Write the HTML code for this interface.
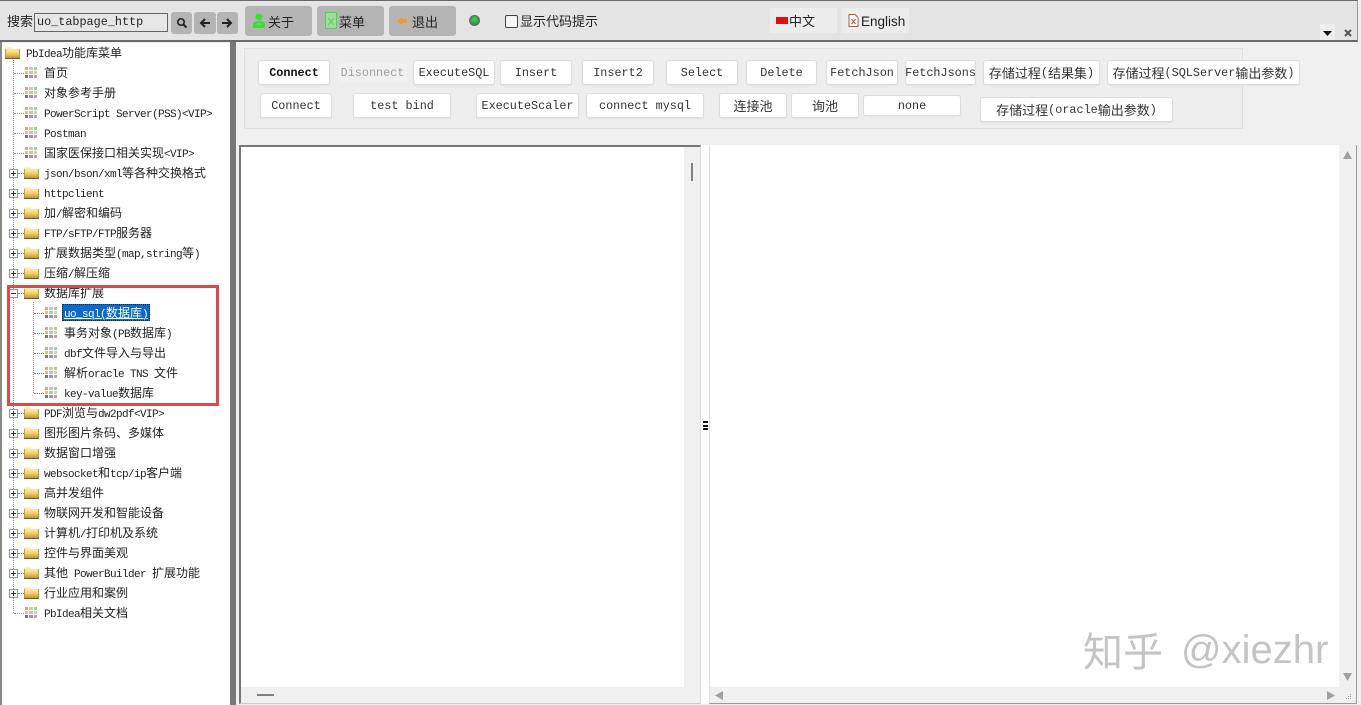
<!DOCTYPE html>
<html lang="zh"><head><meta charset="utf-8"><title>PbIdea</title>
<style>
html,body{margin:0;padding:0;width:1361px;height:705px;overflow:hidden;background:#f0f0f0}
body{position:relative;font-family:"Liberation Mono","Noto Sans CJK SC",monospace;color:#222}
div,span,svg{position:absolute;box-sizing:border-box}
i{font-style:normal}
.t{left:0;font-size:11px;letter-spacing:-.6px;line-height:20px;height:20px;white-space:pre;color:#222}
.t::before{content:"一";font:12px/20px "Noto Sans CJK SC",sans-serif;display:inline-block;width:0;visibility:hidden}
.t i{position:static;font-size:12px;letter-spacing:0;font-family:"Noto Sans CJK SC",sans-serif}
.b{background:#fff;border:1px solid #dcdcdc;border-radius:3px;box-shadow:0 1px 1px #e2e2e2;font-size:11.8px;display:flex;align-items:center;justify-content:center;white-space:pre;color:#333}
.b i{font-size:13px;font-family:"Noto Sans CJK SC",sans-serif}
.tb{background:#b4b4b4;border-radius:3px;top:6px;height:30px;width:67px}
.tl{font:13px/20px "Noto Sans CJK SC",sans-serif;color:#222;white-space:nowrap}
.px{width:9px;height:9px;border:1px solid #8a9aa8;background:#f6f6f6;left:9px}
.px:before{content:"";position:absolute;left:1px;top:3px;width:5px;height:1px;background:#333}
.px.p:after{content:"";position:absolute;left:3px;top:1px;width:1px;height:5px;background:#333}
.dh{height:1px;border-top:1px dotted #888}
.dv{width:1px;border-left:1px dotted #888}
</style></head><body>
<svg width="0" height="0" style="left:0;top:0"><defs>
<symbol id="g" viewBox="0 0 12 11"><rect x="0" y="0" width="3" height="3" fill="#e0a0a0"/><rect x="4" y="0" width="4" height="3" fill="#d0c4bc"/><rect x="9" y="0" width="3" height="3" fill="#a4cca4"/><rect x="0" y="4" width="3" height="3" fill="#e4bc84"/><rect x="4" y="4" width="4" height="3" fill="#b4ccac"/><rect x="9" y="4" width="3" height="3" fill="#c8d8a0"/><rect x="0" y="8" width="3" height="3" fill="#777"/><rect x="4" y="8" width="4" height="3" fill="#a890b8"/><rect x="9" y="8" width="3" height="3" fill="#b8a0c0"/></symbol>
<linearGradient id="fg" x1="0" y1="0" x2="0" y2="1"><stop offset="0" stop-color="#fff6c4"/><stop offset=".5" stop-color="#f4d470"/><stop offset="1" stop-color="#b88a28"/></linearGradient>
<symbol id="f" viewBox="0 0 15 12"><path d="M0 2V11q0 1 1 1h13q1 0 1-1V2H7L6 0H1Q0 0 0 1Z" fill="url(#fg)"/><path d="M0 11.500H15" stroke="#6a5a30"/><path d="M.5 2V11M14.500 2V11" stroke="#a89050" stroke-width=".8"/></symbol>
</defs></svg>

<!-- toolbar -->
<div style="left:0;top:0;width:1358px;height:42px;background:#e4e4e4;border-top:1px solid #6a6a6a;border-bottom:2px solid #6a6a6a;border-right:1px solid #999"></div>
<div class="tl" style="left:7px;top:11px">搜索</div>
<div style="left:34px;top:13px;width:134px;height:19px;background:#e6e6e6;border:1px solid #666;font-size:11.8px;line-height:17px;padding-left:2px;white-space:pre">uo_tabpage_http</div>
<div style="left:171px;top:12px;width:21px;height:22px;background:#b4b4b4;border-radius:3px"></div>
<svg style="left:176px;top:17px" width="12" height="12" viewBox="0 0 12 12"><circle cx="5" cy="5" r="3.200" fill="none" stroke="#222" stroke-width="1.600"/><path d="M7.500 7.500L10.500 10.500" stroke="#222" stroke-width="2"/></svg>
<div style="left:194px;top:12px;width:22px;height:22px;background:#b4b4b4;border-radius:3px"></div>
<svg style="left:199px;top:17px" width="12" height="12" viewBox="0 0 12 12"><path d="M11 6H2M6 2L2 6l4 4" fill="none" stroke="#222" stroke-width="2"/></svg>
<div style="left:217px;top:12px;width:21px;height:22px;background:#b4b4b4;border-radius:3px"></div>
<svg style="left:221px;top:17px" width="12" height="12" viewBox="0 0 12 12"><path d="M1 6h9M6 2l4 4-4 4" fill="none" stroke="#222" stroke-width="2"/></svg>

<div class="tb" style="left:245px"></div>
<svg style="left:252px;top:13px" width="14" height="16" viewBox="0 0 14 16"><circle cx="7" cy="4" r="3.500" fill="#3cdc3c"/><path d="M1 15V10l3-2h6l3 2v5Z" fill="#3cdc3c"/><path d="M5 11h4" stroke="#9c9"/></svg>
<div class="tl" style="left:268px;top:12px">关于</div>
<div class="tb" style="left:317px"></div>
<svg style="left:325px;top:12px" width="12" height="17" viewBox="0 0 12 17"><rect x=".5" y=".5" width="11" height="16" fill="#a6d8a6" stroke="#46dc46"/><path d="M3 6l6 7M9 6l-6 7" stroke="#46dc46"/></svg>
<div class="tl" style="left:339px;top:12px">菜单</div>
<div class="tb" style="left:389px"></div>
<svg style="left:396px;top:15px" width="15" height="12" viewBox="0 0 15 12"><path d="M1 6l5-4v2h5v4H6v2Z" fill="#f09a30"/><path d="M10 1h4v10h-4" fill="none" stroke="#d8b080"/></svg>
<div class="tl" style="left:412px;top:12px">退出</div>
<div style="left:469px;top:15px;width:11px;height:11px;border-radius:50%;background:radial-gradient(circle at 50% 40%,#50d060,#1c7a38);border:1px solid #666"></div>
<div style="left:505px;top:15px;width:13px;height:13px;background:#f4f4f4;border:1.500px solid #444;border-radius:2px"></div>
<div class="tl" style="left:520px;top:11px">显示代码提示</div>
<div style="left:770px;top:8px;width:67px;height:25px;background:#ececec"></div>
<div style="left:776px;top:17px;width:12px;height:7px;background:#e01010"></div>
<div class="tl" style="left:789px;top:11px">中文</div>
<div style="left:842px;top:8px;width:67px;height:25px;background:#ececec"></div>
<svg style="left:848px;top:14px" width="11" height="13" viewBox="0 0 11 13"><path d="M1 .5h6l3 3v9H1Z" fill="#fff" stroke="#b05a4a"/><path d="M3.500 5l4 5M7.500 5l-4 5" stroke="#c03020"/></svg>
<div style="left:861px;top:12px;font:13.500px/20px 'Liberation Sans',sans-serif;color:#222">English</div>
<div style="left:1320px;top:24px;width:15px;height:16px;background:#eeeeee"></div>
<svg style="left:1323px;top:31px" width="9" height="5" viewBox="0 0 9 5"><path d="M0 0h9L4.500 5Z" fill="#111"/></svg>
<svg style="left:1344px;top:29px" width="8" height="8" viewBox="0 0 8 8"><path d="M1 1l6 6M7 1L1 7" stroke="#555" stroke-width="2"/></svg>

<!-- tree -->
<div style="left:0;top:42px;width:2px;height:663px;background:#8a8a8a"></div>
<div style="left:2px;top:43px;width:228px;height:662px;background:#fff"></div>
<div style="left:230px;top:42px;width:6px;height:663px;background:#777"></div>
<div class="dv" style="left:13px;top:60px;height:553px"></div>
<div class="dv" style="left:33px;top:302px;height:91px"></div>
<svg style="left:5px;top:47px" width="15" height="12"><use href="#f"/></svg>
<div class="t" style="left:26px;top:43px">PbIdea<i>功能库菜单</i></div>

<div class="dh" style="left:14px;top:73px;width:10px"></div><svg style="left:25px;top:67px" width="12" height="11"><use href="#g"/></svg><div class="t" style="left:44px;top:63px"><i>首页</i></div>
<div class="dh" style="left:14px;top:93px;width:10px"></div><svg style="left:25px;top:87px" width="12" height="11"><use href="#g"/></svg><div class="t" style="left:44px;top:83px"><i>对象参考手册</i></div>
<div class="dh" style="left:14px;top:113px;width:10px"></div><svg style="left:25px;top:107px" width="12" height="11"><use href="#g"/></svg><div class="t" style="left:44px;top:103px">PowerScript Server(PSS)&lt;VIP&gt;</div>
<div class="dh" style="left:14px;top:133px;width:10px"></div><svg style="left:25px;top:127px" width="12" height="11"><use href="#g"/></svg><div class="t" style="left:44px;top:123px">Postman</div>
<div class="dh" style="left:14px;top:153px;width:10px"></div><svg style="left:25px;top:147px" width="12" height="11"><use href="#g"/></svg><div class="t" style="left:44px;top:143px"><i>国家医保接口相关实现</i>&lt;VIP&gt;</div>

<div class="dh" style="left:18px;top:173px;width:6px"></div><div class="px p" style="top:169px"></div><svg style="left:24px;top:167px" width="15" height="12"><use href="#f"/></svg><div class="t" style="left:44px;top:163px">json/bson/xml<i>等各种交换格式</i></div>
<div class="dh" style="left:18px;top:193px;width:6px"></div><div class="px p" style="top:189px"></div><svg style="left:24px;top:187px" width="15" height="12"><use href="#f"/></svg><div class="t" style="left:44px;top:183px">httpclient</div>
<div class="dh" style="left:18px;top:213px;width:6px"></div><div class="px p" style="top:209px"></div><svg style="left:24px;top:207px" width="15" height="12"><use href="#f"/></svg><div class="t" style="left:44px;top:203px"><i>加</i>/<i>解密和编码</i></div>
<div class="dh" style="left:18px;top:233px;width:6px"></div><div class="px p" style="top:229px"></div><svg style="left:24px;top:227px" width="15" height="12"><use href="#f"/></svg><div class="t" style="left:44px;top:223px">FTP/sFTP/FTP<i>服务器</i></div>
<div class="dh" style="left:18px;top:253px;width:6px"></div><div class="px p" style="top:249px"></div><svg style="left:24px;top:247px" width="15" height="12"><use href="#f"/></svg><div class="t" style="left:44px;top:243px"><i>扩展数据类型</i>(map,string<i>等</i>)</div>
<div class="dh" style="left:18px;top:273px;width:6px"></div><div class="px p" style="top:269px"></div><svg style="left:24px;top:267px" width="15" height="12"><use href="#f"/></svg><div class="t" style="left:44px;top:263px"><i>压缩</i>/<i>解压缩</i></div>
<div class="dh" style="left:18px;top:293px;width:6px"></div><div class="px" style="top:289px"></div><svg style="left:24px;top:287px" width="15" height="12"><use href="#f"/></svg><div class="t" style="left:44px;top:283px"><i>数据库扩展</i></div>

<div class="dh" style="left:34px;top:313px;width:10px"></div><svg style="left:45px;top:307px" width="12" height="11"><use href="#g"/></svg>
<div style="left:62px;top:304px;width:88px;height:17px;background:#0a6cc8;border:1px dotted #222"></div>
<div class="t" style="left:64px;top:303px;color:#fff;text-decoration:underline">uo_sql(<i>数据库</i>)</div>
<div class="dh" style="left:34px;top:333px;width:10px"></div><svg style="left:45px;top:327px" width="12" height="11"><use href="#g"/></svg><div class="t" style="left:64px;top:323px"><i>事务对象</i>(PB<i>数据库</i>)</div>
<div class="dh" style="left:34px;top:353px;width:10px"></div><svg style="left:45px;top:347px" width="12" height="11"><use href="#g"/></svg><div class="t" style="left:64px;top:343px">dbf<i>文件导入与导出</i></div>
<div class="dh" style="left:34px;top:373px;width:10px"></div><svg style="left:45px;top:367px" width="12" height="11"><use href="#g"/></svg><div class="t" style="left:64px;top:363px"><i>解析</i>oracle TNS <i>文件</i></div>
<div class="dh" style="left:34px;top:393px;width:10px"></div><svg style="left:45px;top:387px" width="12" height="11"><use href="#g"/></svg><div class="t" style="left:64px;top:383px">key-value<i>数据库</i></div>

<div class="dh" style="left:18px;top:413px;width:6px"></div><div class="px p" style="top:409px"></div><svg style="left:24px;top:407px" width="15" height="12"><use href="#f"/></svg><div class="t" style="left:44px;top:403px">PDF<i>浏览与</i>dw2pdf&lt;VIP&gt;</div>
<div class="dh" style="left:18px;top:433px;width:6px"></div><div class="px p" style="top:429px"></div><svg style="left:24px;top:427px" width="15" height="12"><use href="#f"/></svg><div class="t" style="left:44px;top:423px"><i>图形图片条码、多媒体</i></div>
<div class="dh" style="left:18px;top:453px;width:6px"></div><div class="px p" style="top:449px"></div><svg style="left:24px;top:447px" width="15" height="12"><use href="#f"/></svg><div class="t" style="left:44px;top:443px"><i>数据窗口增强</i></div>
<div class="dh" style="left:18px;top:473px;width:6px"></div><div class="px p" style="top:469px"></div><svg style="left:24px;top:467px" width="15" height="12"><use href="#f"/></svg><div class="t" style="left:44px;top:463px">websocket<i>和</i>tcp/ip<i>客户端</i></div>
<div class="dh" style="left:18px;top:493px;width:6px"></div><div class="px p" style="top:489px"></div><svg style="left:24px;top:487px" width="15" height="12"><use href="#f"/></svg><div class="t" style="left:44px;top:483px"><i>高并发组件</i></div>
<div class="dh" style="left:18px;top:513px;width:6px"></div><div class="px p" style="top:509px"></div><svg style="left:24px;top:507px" width="15" height="12"><use href="#f"/></svg><div class="t" style="left:44px;top:503px"><i>物联网开发和智能设备</i></div>
<div class="dh" style="left:18px;top:533px;width:6px"></div><div class="px p" style="top:529px"></div><svg style="left:24px;top:527px" width="15" height="12"><use href="#f"/></svg><div class="t" style="left:44px;top:523px"><i>计算机</i>/<i>打印机及系统</i></div>
<div class="dh" style="left:18px;top:553px;width:6px"></div><div class="px p" style="top:549px"></div><svg style="left:24px;top:547px" width="15" height="12"><use href="#f"/></svg><div class="t" style="left:44px;top:543px"><i>控件与界面美观</i></div>
<div class="dh" style="left:18px;top:573px;width:6px"></div><div class="px p" style="top:569px"></div><svg style="left:24px;top:567px" width="15" height="12"><use href="#f"/></svg><div class="t" style="left:44px;top:563px"><i>其他</i> PowerBuilder <i>扩展功能</i></div>
<div class="dh" style="left:18px;top:593px;width:6px"></div><div class="px p" style="top:589px"></div><svg style="left:24px;top:587px" width="15" height="12"><use href="#f"/></svg><div class="t" style="left:44px;top:583px"><i>行业应用和案例</i></div>
<div class="dh" style="left:14px;top:613px;width:10px"></div><svg style="left:25px;top:607px" width="12" height="11"><use href="#g"/></svg><div class="t" style="left:44px;top:603px">PbIdea<i>相关文档</i></div>

<div style="left:7px;top:285px;width:212px;height:121px;border:3px solid #d94a4a"></div>

<!-- button group -->
<div style="left:244px;top:48px;width:999px;height:81px;background:#eeeeee;border:1px solid #e0e0e0"></div>
<div class="b" style="left:258px;top:60px;width:72px;height:25px;font-weight:bold;color:#111">Connect</div>
<div class="b" style="left:337px;top:61px;width:71px;height:23px;background:#f0f0f0;border-color:#ececec;box-shadow:none;color:#a0a0a0">Disonnect</div>
<div class="b" style="left:413px;top:60px;width:82px;height:25px">ExecuteSQL</div>
<div class="b" style="left:500px;top:60px;width:72px;height:25px">Insert</div>
<div class="b" style="left:582px;top:60px;width:72px;height:25px">Insert2</div>
<div class="b" style="left:666px;top:60px;width:72px;height:25px">Select</div>
<div class="b" style="left:746px;top:60px;width:71px;height:25px">Delete</div>
<div class="b" style="left:826px;top:60px;width:72px;height:25px">FetchJson</div>
<div class="b" style="left:905px;top:60px;width:71px;height:25px">FetchJsons</div>
<div class="b" style="left:983px;top:60px;width:117px;height:25px"><i>存储过程</i>(<i>结果集</i>)</div>
<div class="b" style="left:1107px;top:60px;width:193px;height:25px"><i>存储过程</i>(SQLServer<i>输出参数</i>)</div>
<div class="b" style="left:260px;top:93px;width:72px;height:25px">Connect</div>
<div class="b" style="left:353px;top:93px;width:98px;height:25px">test bind</div>
<div class="b" style="left:476px;top:93px;width:103px;height:25px">ExecuteScaler</div>
<div class="b" style="left:586px;top:93px;width:118px;height:25px">connect mysql</div>
<div class="b" style="left:719px;top:93px;width:68px;height:25px"><i>连接池</i></div>
<div class="b" style="left:791px;top:93px;width:68px;height:25px"><i>询池</i></div>
<div class="b" style="left:863px;top:95px;width:98px;height:21px">none</div>
<div class="b" style="left:980px;top:97px;width:193px;height:25px"><i>存储过程</i>(oracle<i>输出参数</i>)</div>

<!-- editor 1 -->
<div style="left:239px;top:145px;width:462px;height:559px;background:#f0f0f0;border-top:2px solid #777;border-left:2px solid #777;border-bottom:1px solid #ccc;border-right:1px solid #ddd"></div>
<div style="left:241px;top:147px;width:443px;height:540px;background:#fff"></div>
<div style="left:691px;top:163px;width:2px;height:18px;background:#808080"></div>
<div style="left:257px;top:694px;width:17px;height:2px;background:#808080"></div>

<!-- splitter -->
<div style="left:701px;top:145px;width:8px;height:559px;background:#fff"></div>
<div style="left:703px;top:421px;width:5px;height:2px;background:#111"></div>
<div style="left:703px;top:425px;width:5px;height:2px;background:#111"></div>
<div style="left:703px;top:428px;width:5px;height:2px;background:#111"></div>

<!-- editor 2 -->
<div style="left:709px;top:145px;width:648px;height:559px;background:#f0f0f0;border-left:1px solid #ddd;border-bottom:1px solid #999;border-right:1px solid #999"></div>
<div style="left:710px;top:145px;width:629px;height:542px;background:#fff"></div>
<svg style="left:1343px;top:151px" width="9" height="8" viewBox="0 0 9 8"><path d="M4.500 0L9 8H0Z" fill="#a0a0a0"/></svg>
<svg style="left:1343px;top:673px" width="9" height="8" viewBox="0 0 9 8"><path d="M0 0h9L4.500 8Z" fill="#a0a0a0"/></svg>
<svg style="left:715px;top:691px" width="8" height="9" viewBox="0 0 8 9"><path d="M8 0v9L0 4.500Z" fill="#a0a0a0"/></svg>
<svg style="left:1327px;top:691px" width="8" height="9" viewBox="0 0 8 9"><path d="M0 0v9l8-4.500Z" fill="#a0a0a0"/></svg>
<svg style="left:1343px;top:693px" width="9" height="9" viewBox="0 0 9 9"><path d="M7 1h1v1H7ZM5 3h1v1H5ZM7 3h1v1H7ZM3 5h1v1H3ZM5 5h1v1H5ZM7 5h1v1H7Z" fill="#999"/></svg>

<div style="left:1083px;top:625px;font:40px/48px 'Noto Sans CJK SC',sans-serif;color:#c4c4c4;white-space:nowrap">知乎</div>
<div style="left:1181px;top:626px;font:40px/48px 'Liberation Sans',sans-serif;color:#c4c4c4;white-space:nowrap">@xiezhr</div>
</body></html>
